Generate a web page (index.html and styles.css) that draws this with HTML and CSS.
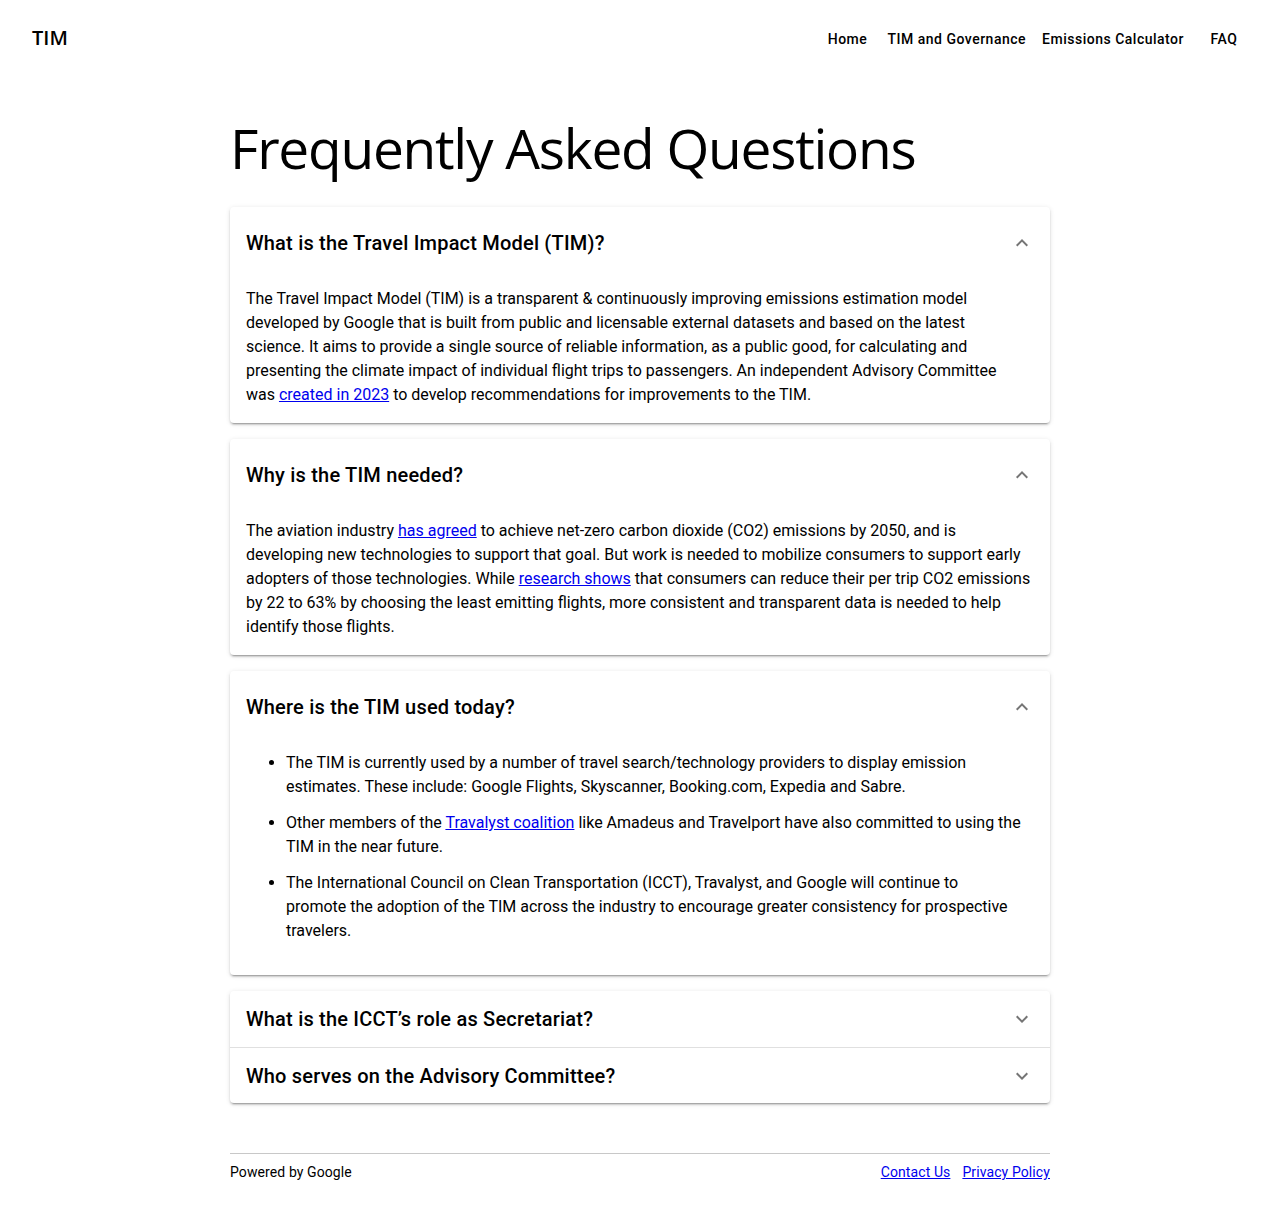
FILE: index.html
```html
<!DOCTYPE html>
<html lang="en">
<head>
<meta charset="utf-8">
<title>FAQ - TIM</title>
<link rel="stylesheet" href="styles.css">
</head>
<body>
<header class="topbar">
  <div class="brand">TIM</div>
  <nav class="nav">
    <a class="nav-btn" href="#">Home</a>
    <a class="nav-btn" href="#">TIM and Governance</a>
    <a class="nav-btn" href="#">Emissions Calculator</a>
    <a class="nav-btn" href="#">FAQ</a>
  </nav>
</header>
<main class="content">
  <h1 class="page-title">Frequently Asked Questions</h1>

  <section class="panel expanded">
    <div class="panel-header">
      <span class="panel-title">What is the Travel Impact Model (TIM)?</span>
      <svg class="chev" viewBox="0 0 24 24" width="24" height="24"><path d="M7.4 15.4 12 10.8l4.6 4.6 1.4-1.4-6-6-6 6z"/></svg>
    </div>
    <div class="panel-body">
      <p>The Travel Impact Model (TIM) is a transparent &amp; continuously improving emissions estimation model developed by Google that is built from public and licensable external datasets and based on the latest<br>science. It aims to provide a single source of reliable information, as a public good, for calculating and presenting the climate impact of individual flight trips to passengers. An independent Advisory Committee<br>was <a href="#">created in 2023</a> to develop recommendations for improvements to the TIM.</p>
    </div>
  </section>

  <section class="panel expanded">
    <div class="panel-header">
      <span class="panel-title">Why is the TIM needed?</span>
      <svg class="chev" viewBox="0 0 24 24" width="24" height="24"><path d="M7.4 15.4 12 10.8l4.6 4.6 1.4-1.4-6-6-6 6z"/></svg>
    </div>
    <div class="panel-body">
      <p>The aviation industry <a href="#">has agreed</a> to achieve net-zero carbon dioxide (CO2) emissions by 2050, and is developing new technologies to support that goal. But work is needed to mobilize consumers to support early adopters of those technologies. While <a href="#">research shows</a> that consumers can reduce their per trip CO2 emissions by 22 to 63% by choosing the least emitting flights, more consistent and transparent data is needed to help identify those flights.</p>
    </div>
  </section>

  <section class="panel expanded">
    <div class="panel-header">
      <span class="panel-title">Where is the TIM used today?</span>
      <svg class="chev" viewBox="0 0 24 24" width="24" height="24"><path d="M7.4 15.4 12 10.8l4.6 4.6 1.4-1.4-6-6-6 6z"/></svg>
    </div>
    <div class="panel-body">
      <ul class="list">
        <li>The TIM is currently used by a number of travel search/technology providers to display emission estimates. These include: Google Flights, Skyscanner, Booking.com, Expedia and Sabre.</li>
        <li>Other members of the <a href="#">Travalyst coalition</a> like Amadeus and Travelport have also committed to using the TIM in the near future.</li>
        <li>The International Council on Clean Transportation (ICCT), Travalyst, and Google will continue to<br>promote the adoption of the TIM across the industry to encourage greater consistency for prospective travelers.</li>
      </ul>
    </div>
  </section>

  <section class="panel group">
    <div class="panel-header collapsed">
      <span class="panel-title">What is the ICCT’s role as Secretariat?</span>
      <svg class="chev" viewBox="0 0 24 24" width="24" height="24"><path d="M16.6 8.6 12 13.2 7.4 8.6 6 10l6 6 6-6z"/></svg>
    </div>
    <div class="panel-header collapsed divided">
      <span class="panel-title">Who serves on the Advisory Committee?</span>
      <svg class="chev" viewBox="0 0 24 24" width="24" height="24"><path d="M16.6 8.6 12 13.2 7.4 8.6 6 10l6 6 6-6z"/></svg>
    </div>
  </section>

  <footer class="footer">
    <span>Powered by Google</span>
    <div class="footer-links">
      <a href="#">Contact Us</a>
      <a href="#">Privacy Policy</a>
    </div>
  </footer>
</main>
</body>
</html>
```

FILE: styles.css
```css
* { box-sizing: border-box; }

html, body {
  margin: 0;
  padding: 0;
  background: #fff;
  color: #000;
  font-family: Roboto, "Liberation Sans", Arial, sans-serif;
}

.topbar {
  height: 78px;
  display: flex;
  align-items: center;
  justify-content: space-between;
  padding: 0 24px 0 32px;
}

.brand {
  font-family: "Open Sans", "Noto Sans", sans-serif;
  font-size: 20px;
  font-weight: 600;
  color: #000;
  padding-bottom: 3px;
}

.nav {
  display: flex;
  align-items: center;
}

.nav-btn {
  min-width: 64px;
  padding: 0 8px;
  height: 36px;
  display: inline-flex;
  align-items: center;
  justify-content: center;
  font-size: 14px;
  font-weight: 500;
  letter-spacing: 0.5px;
  color: #000;
  text-decoration: none;
}

.content {
  width: 820px;
  margin: 0 auto;
}

.page-title {
  font-family: "Open Sans", "Noto Sans", sans-serif;
  font-size: 55px;
  font-weight: 400;
  letter-spacing: -1.25px;
  line-height: 72px;
  margin: 34px 0 23px;
}

.panel {
  background: #fff;
  border-radius: 4px;
  margin-bottom: 16px;
  box-shadow: 0 3px 1px -2px rgba(0,0,0,.2), 0 2px 2px 0 rgba(0,0,0,.14), 0 1px 5px 0 rgba(0,0,0,.12);
}

.panel-header {
  height: 72px;
  display: flex;
  align-items: center;
  justify-content: space-between;
  padding: 0 16px;
}

.panel-header.collapsed {
  height: 56px;
}

.panel-header.divided {
  border-top: 1px solid #e0e0e0;
}

.panel-title {
  font-size: 20px;
  font-weight: 500;
  letter-spacing: 0.2px;
}

.chev {
  fill: #757575;
}

.panel-body {
  padding: 8px 16px 16px;
  font-size: 16px;
  line-height: 24px;
}

.panel-body p {
  margin: 0;
}

.panel-body a, .footer a {
  color: #0000ee;
}

.list {
  margin: 0 0 16px;
  padding-left: 40px;
}

.list li + li {
  margin-top: 12px;
}

.footer {
  margin-top: 50px;
  border-top: 1px solid #c8c8c8;
  display: flex;
  justify-content: space-between;
  align-items: center;
  padding: 9px 0 27px;
  font-size: 14px;
  line-height: 18px;
  letter-spacing: 0.1px;
}

.footer-links {
  display: flex;
  gap: 12px;
}
```
